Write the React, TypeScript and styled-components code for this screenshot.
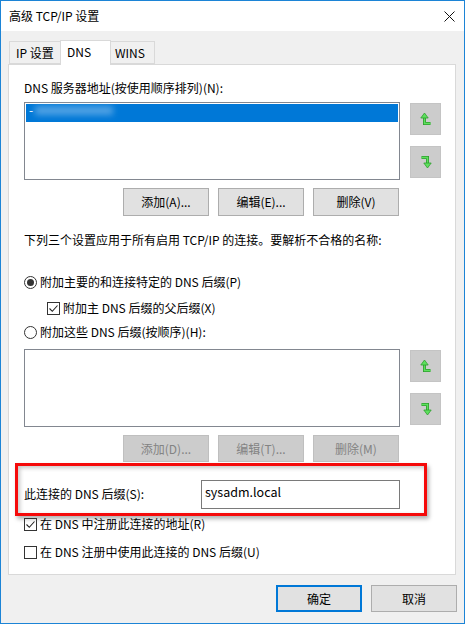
import React from "react";
import styled, { createGlobalStyle } from "styled-components";

const GlobalStyle = createGlobalStyle`
  html, body {
    margin: 0;
    padding: 0;
    background: #f0f0f0;
  }
  body {
    font-family: "Noto Sans CJK SC", "Noto Sans", sans-serif;
    font-size: 12px;
    color: #000;
  }
`;

const Window = styled.div`
  width: 465px;
  height: 624px;
  box-sizing: border-box;
  border: 1px solid #1c84d6;
  background: #f0f0f0;
  display: flex;
  flex-direction: column;
`;

const TitleBar = styled.div`
  height: 30px;
  background: #fff;
  display: flex;
  align-items: center;
  justify-content: space-between;
  padding: 0 9px 0 8px;
  line-height: 16px;
`;

const Body = styled.div`
  padding: 9px 8px 0 7px;
`;

const TabStrip = styled.div`
  display: flex;
  align-items: flex-end;
  height: 25px;
  padding-left: 1px;
  margin-bottom: -1px;
  position: relative;
  z-index: 1;
`;

const Tab = styled.div<{ $active?: boolean; $w: number }>`
  box-sizing: border-box;
  width: ${(p) => p.$w}px;
  height: ${(p) => (p.$active ? 25 : 23)}px;
  margin-bottom: ${(p) => (p.$active ? 0 : 1)}px;
  padding: 3px 0 0 6px;
  line-height: 16px;
  background: ${(p) => (p.$active ? "#fff" : "#f0f0f0")};
  border: 1px solid #d9d9d9;
  border-bottom: ${(p) => (p.$active ? "none" : "1px solid #d9d9d9")};
  margin-left: ${(p) => (p.$active ? 0 : -1)}px;
  &:first-child {
    margin-left: 0;
  }
`;

const Panel = styled.div`
  box-sizing: border-box;
  width: 448px;
  height: 511px;
  background: #fff;
  border: 1px solid #d9d9d9;
  padding: 15px 0 0 15px;
  display: flex;
  flex-direction: column;
`;

const TextLine = styled.div<{ $mt?: number }>`
  height: 16px;
  line-height: 16px;
  margin-top: ${(p) => p.$mt ?? 0}px;
  white-space: nowrap;
`;

const ListRow = styled.div<{ $mt: number }>`
  display: flex;
  align-items: flex-start;
  margin-top: ${(p) => p.$mt}px;
`;

const ListBox = styled.div`
  box-sizing: border-box;
  width: 376px;
  height: 78px;
  border: 1px solid #828790;
  padding: 1px;
  background: #fff;
`;

const SelectedItem = styled.div`
  height: 18px;
  background: #0078d7;
  position: relative;
  color: #fff;
  line-height: 12px;
  padding-left: 3px;
`;

const Blurred = styled.span`
  display: inline-block;
  width: 78px;
  height: 9px;
  margin-left: 2px;
  background: rgba(180, 215, 245, 0.45);
  filter: blur(3px);
`;

const ArrowColumn = styled.div`
  display: flex;
  flex-direction: column;
  gap: 11px;
  margin-left: 10px;
  padding-top: 1px;
`;

const ArrowButton = styled.div`
  box-sizing: border-box;
  width: 31px;
  height: 32px;
  background: #cccccc;
  border: 1px solid #c4c4c4;
  display: flex;
  align-items: center;
  justify-content: center;
`;

const ButtonRow = styled.div<{ $mt: number }>`
  display: flex;
  justify-content: flex-end;
  gap: 9px;
  width: 375px;
  margin-top: ${(p) => p.$mt}px;
`;

const Button = styled.div<{ $disabled?: boolean; $default?: boolean; $h?: number }>`
  box-sizing: border-box;
  width: 86px;
  height: ${(p) => p.$h ?? 28}px;
  display: flex;
  align-items: center;
  justify-content: center;
  background: ${(p) => (p.$disabled ? "#cccccc" : "#e1e1e1")};
  color: ${(p) => (p.$disabled ? "#838383" : "#000")};
  border: ${(p) =>
    p.$default ? "2px solid #0078d7" : p.$disabled ? "1px solid #bfbfbf" : "1px solid #adadad"};
  line-height: 16px;
`;

const OptionRow = styled.div<{ $mt: number; $indent?: number }>`
  display: flex;
  align-items: center;
  height: 16px;
  line-height: 16px;
  margin-top: ${(p) => p.$mt}px;
  padding-left: ${(p) => p.$indent ?? 0}px;
  white-space: nowrap;
`;

const Radio = styled.span<{ $checked?: boolean }>`
  box-sizing: border-box;
  width: 13px;
  height: 13px;
  border: 1px solid #333;
  border-radius: 50%;
  margin-right: 3px;
  display: flex;
  align-items: center;
  justify-content: center;
  &::after {
    content: "";
    width: 7px;
    height: 7px;
    border-radius: 50%;
    background: ${(p) => (p.$checked ? "#333" : "transparent")};
  }
`;

const Check = styled.span`
  box-sizing: border-box;
  width: 13px;
  height: 13px;
  border: 1px solid #333;
  margin-right: 3px;
  display: flex;
  align-items: center;
  justify-content: center;
`;

const RedBox = styled.div`
  box-sizing: border-box;
  width: 412px;
  height: 53px;
  margin: 1px 0 0 -9px;
  border: 3px solid #f50a0a;
  padding: 13px 0 4px 6px;
  display: flex;
  align-items: center;
  box-shadow: inset 2px 2px 4px rgba(0, 0, 0, 0.22), 2px 3px 4px rgba(0, 0, 0, 0.3);
`;

const SuffixLabel = styled.div`
  width: 177px;
  line-height: 16px;
  white-space: nowrap;
`;

const TextInput = styled.div`
  box-sizing: border-box;
  width: 199px;
  height: 29px;
  border: 1px solid #7a7a7a;
  background: #fff;
  padding: 3px 0 0 3px;
  line-height: 16px;
  font-size: 12.5px;
`;

const Footer = styled.div`
  display: flex;
  justify-content: flex-end;
  gap: 9px;
  padding: 10px 7px 0 0;
`;

const CloseIcon = () => (
  <svg width="11" height="11" viewBox="0 0 11 11">
    <path d="M0.5 0.5 L10.5 10.5 M10.5 0.5 L0.5 10.5" stroke="#111" strokeWidth="1" />
  </svg>
);

const UpIcon = () => (
  <svg width="12" height="14" viewBox="0 0 12 14">
    <path d="M4.5 5 V11.5 H10.5" fill="none" stroke="#2f9e2f" strokeWidth="3" />
    <path d="M4.5 5 V11.5 H10.5" fill="none" stroke="#5ee05e" strokeWidth="1.4" />
    <polygon points="0.8,6 4.5,1 8.2,6" fill="#5ee05e" stroke="#2f9e2f" strokeWidth="0.8" />
  </svg>
);

const DownIcon = () => (
  <svg width="12" height="14" viewBox="0 0 12 14">
    <path d="M1.5 2.5 H7.5 V8.5" fill="none" stroke="#2f9e2f" strokeWidth="3" />
    <path d="M1.5 2.5 H7.5 V8.5" fill="none" stroke="#5ee05e" strokeWidth="1.4" />
    <polygon points="3.8,8 7.5,13 11.2,8" fill="#5ee05e" stroke="#2f9e2f" strokeWidth="0.8" />
  </svg>
);

const CheckMark = () => (
  <svg width="11" height="11" viewBox="0 0 11 11">
    <path d="M1.5 5.5 L4.3 8.3 L9.5 2.5" fill="none" stroke="#222" strokeWidth="1.1" />
  </svg>
);

const Arrows = () => (
  <ArrowColumn>
    <ArrowButton>
      <UpIcon />
    </ArrowButton>
    <ArrowButton>
      <DownIcon />
    </ArrowButton>
  </ArrowColumn>
);

const App: React.FC = () => {
  return (
    <>
      <GlobalStyle />
      <Window>
        <TitleBar>
          <span>高级 TCP/IP 设置</span>
          <CloseIcon />
        </TitleBar>
        <Body>
          <TabStrip>
            <Tab $w={52}>IP 设置</Tab>
            <Tab $w={51} $active style={{ marginLeft: -1 }}>
              DNS
            </Tab>
            <Tab $w={45} style={{ paddingLeft: 4 }}>
              WINS
            </Tab>
          </TabStrip>
          <Panel>
            <TextLine>DNS 服务器地址(按使用顺序排列)(N):</TextLine>
            <ListRow $mt={6}>
              <ListBox>
                <SelectedItem>
                  -<Blurred />
                </SelectedItem>
              </ListBox>
              <Arrows />
            </ListRow>
            <ButtonRow $mt={8}>
              <Button>添加(A)...</Button>
              <Button>编辑(E)...</Button>
              <Button>删除(V)</Button>
            </ButtonRow>
            <TextLine $mt={16}>下列三个设置应用于所有启用 TCP/IP 的连接。要解析不合格的名称:</TextLine>
            <OptionRow $mt={26}>
              <Radio $checked />
              附加主要的和连接特定的 DNS 后缀(P)
            </OptionRow>
            <OptionRow $mt={10} $indent={23}>
              <Check>
                <CheckMark />
              </Check>
              附加主 DNS 后缀的父后缀(X)
            </OptionRow>
            <OptionRow $mt={8}>
              <Radio />
              附加这些 DNS 后缀(按顺序)(H):
            </OptionRow>
            <ListRow $mt={9}>
              <ListBox />
              <Arrows />
            </ListRow>
            <ButtonRow $mt={8}>
              <Button $disabled $h={27}>添加(D)...</Button>
              <Button $disabled $h={27}>编辑(T)...</Button>
              <Button $disabled $h={27}>删除(M)</Button>
            </ButtonRow>
            <RedBox>
              <SuffixLabel>此连接的 DNS 后缀(S):</SuffixLabel>
              <TextInput>sysadm.local</TextInput>
            </RedBox>
            <OptionRow $mt={0}>
              <Check>
                <CheckMark />
              </Check>
              在 DNS 中注册此连接的地址(R)
            </OptionRow>
            <OptionRow $mt={12}>
              <Check />
              在 DNS 注册中使用此连接的 DNS 后缀(U)
            </OptionRow>
          </Panel>
        </Body>
        <Footer>
          <Button $default $h={27}>确定</Button>
          <Button $h={27}>取消</Button>
        </Footer>
      </Window>
    </>
  );
};

export default App;
